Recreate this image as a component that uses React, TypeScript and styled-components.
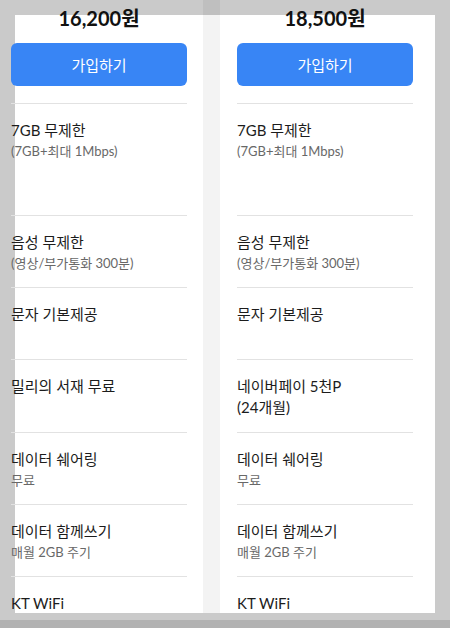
import React from "react";
import styled, { createGlobalStyle } from "styled-components";

const GlobalStyle = createGlobalStyle`
  html, body {
    margin: 0;
    padding: 0;
    background: #cacaca;
  }
  body {
    font-family: "Lato", "Noto Sans CJK KR", sans-serif;
    color: #1c1c1c;
  }
`;

const Screen = styled.div`
  width: 450px;
  height: 628px;
  display: flex;
  flex-direction: column;
  overflow: hidden;
`;

// white sheets and the light gutter between them, painted as background layers
const Sheet = styled.div`
  height: 613px;
  flex: none;
  overflow: hidden;
  background:
    linear-gradient(#fff, #fff) 15px 15px / 188px 598px no-repeat,
    linear-gradient(#f3f3f3, #f3f3f3) 203px 15px / 17px 598px no-repeat,
    linear-gradient(#fff, #fff) 220px 15px / 215px 598px no-repeat,
    linear-gradient(#bfbfbf, #bfbfbf) 203px 0 / 17px 15px no-repeat,
    #cacaca;
`;

const Footer = styled.div`
  flex: 1;
  background: linear-gradient(#cacaca 0 7px, #b2b2b2 7px);
`;

const Compare = styled.div`
  display: grid;
  grid-template-columns: 176px 176px;
  column-gap: 50px;
  padding: 6px 0 0 11px;
`;

const Head = styled.div`
  display: flex;
  flex-direction: column;
  align-items: stretch;
`;

const Price = styled.div`
  text-align: center;
  font-size: 20px;
  font-weight: 700;
  line-height: 24px;
  color: #111;
  margin-bottom: 13px;
`;

const JoinButton = styled.button`
  height: 43px;
  border: none;
  border-radius: 6px;
  background: #3885f5;
  color: #fff;
  font-family: "Noto Sans CJK KR", sans-serif;
  font-size: 15px;
  cursor: pointer;
  margin-bottom: 17px;
`;

const Feature = styled.div<{ $tall?: boolean }>`
  box-sizing: border-box;
  min-height: ${(p) => (p.$tall ? 112 : 72)}px;
  border-top: 1px solid #e2e2e2;
  padding: 16px 0 14px;
`;

const Title = styled.div`
  font-size: 15px;
  line-height: 21px;
  color: #1c1c1c;
`;

const Sub = styled.div`
  font-size: 13px;
  line-height: 20px;
  color: #686868;
`;

type Item = { title: string[]; sub?: string };

const plans: { price: string; items: Item[] }[] = [
  {
    price: "16,200원",
    items: [
      { title: ["7GB 무제한"], sub: "(7GB+최대 1Mbps)" },
      { title: ["음성 무제한"], sub: "(영상/부가통화 300분)" },
      { title: ["문자 기본제공"] },
      { title: ["밀리의 서재 무료"] },
      { title: ["데이터 쉐어링"], sub: "무료" },
      { title: ["데이터 함께쓰기"], sub: "매월 2GB 주기" },
      { title: ["KT WiFi"], sub: "무료" },
    ],
  },
  {
    price: "18,500원",
    items: [
      { title: ["7GB 무제한"], sub: "(7GB+최대 1Mbps)" },
      { title: ["음성 무제한"], sub: "(영상/부가통화 300분)" },
      { title: ["문자 기본제공"] },
      { title: ["네이버페이 5천P", "(24개월)"] },
      { title: ["데이터 쉐어링"], sub: "무료" },
      { title: ["데이터 함께쓰기"], sub: "매월 2GB 주기" },
      { title: ["KT WiFi"], sub: "무료" },
    ],
  },
];

const App: React.FC = () => {
  const rows = plans[0].items.map((_, i) => i);

  return (
    <>
      <GlobalStyle />
      <Screen>
        <Sheet>
          <Compare>
            {plans.map((plan) => (
              <Head key={plan.price}>
                <Price>{plan.price}</Price>
                <JoinButton type="button">가입하기</JoinButton>
              </Head>
            ))}
            {rows.map((i) =>
              plans.map((plan, p) => {
                const item = plan.items[i];
                return (
                  <Feature key={`${i}-${p}`} $tall={i === 0}>
                    {item.title.map((line) => (
                      <Title key={line}>{line}</Title>
                    ))}
                    {item.sub && <Sub>{item.sub}</Sub>}
                  </Feature>
                );
              })
            )}
          </Compare>
        </Sheet>
        <Footer />
      </Screen>
    </>
  );
};

export default App;
